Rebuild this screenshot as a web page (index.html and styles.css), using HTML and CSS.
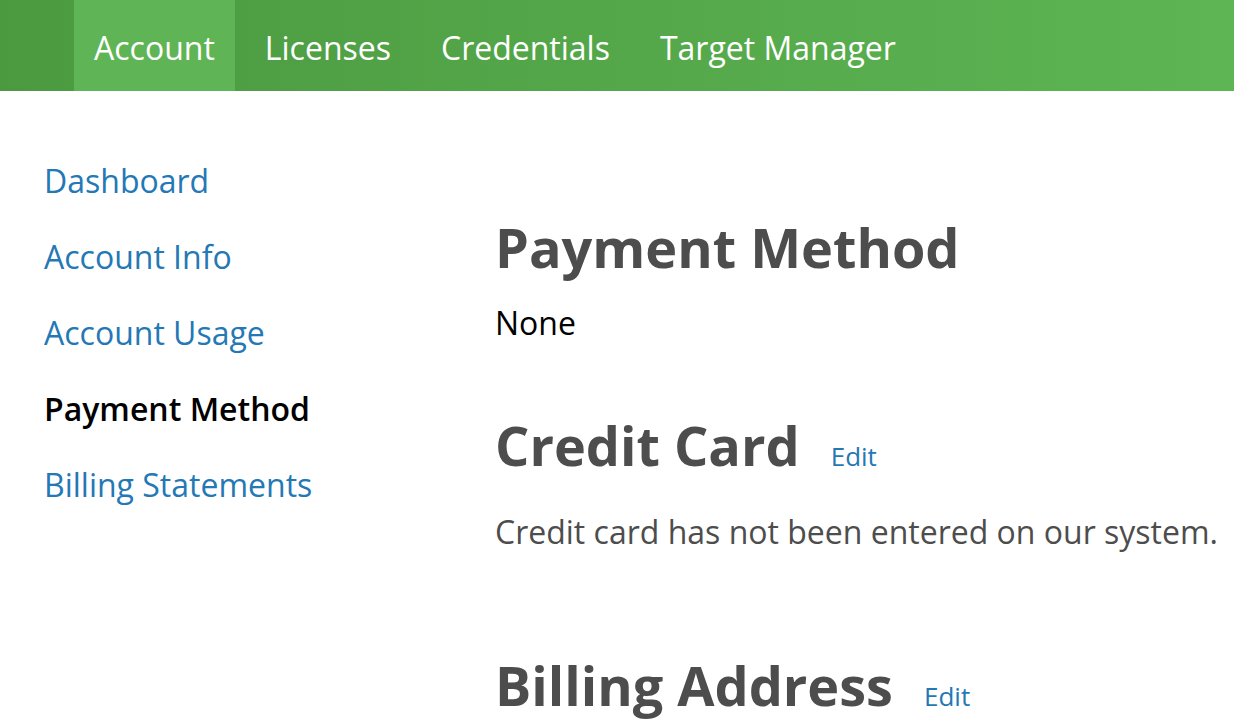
FILE: index.html
```html
<!DOCTYPE html>
<html lang="en">
<head>
    <meta charset="UTF-8">
    <meta name="viewport" content="width=device-width, initial-scale=1.0">
    <title>Payment Method</title>
    <link rel="stylesheet" href="styles.css">
</head>
<body>
    <!-- top navigation -->
    <div class="topnav">
        <a class="tab active" href="#">Account</a>
        <a class="tab" href="#">Licenses</a>
        <a class="tab" href="#">Credentials</a>
        <a class="tab" href="#">Target Manager</a>
    </div>
    <div class="page">
        <ul class="sidebar">
            <li><a href="#">Dashboard</a></li>
            <li><a href="#">Account Info</a></li>
            <li><a href="#">Account Usage</a></li>
            <li class="current">Payment Method</li>
            <li><a href="#">Billing Statements</a></li>
        </ul>
        <div class="content">
            <h1>Payment Method</h1>
            <p class="value">None</p>
            <h2>Credit Card <a class="edit" href="#">Edit</a></h2>
            <p class="note">Credit card has not been entered on our system.</p>
            <h2 class="billing">Billing Address <a class="edit" href="#">Edit</a></h2>
        </div>
    </div>
</body>
</html>
```

FILE: styles.css
```css
body {
    margin: 0;
    font-family: "Open Sans", "Liberation Sans", sans-serif;
    background: #fff;
    overflow: hidden;
}
.topnav {
    display: flex;
    gap: 10px;
    height: 91px;
    padding-left: 74px;
    background: linear-gradient(to right, #4b9a40, #5db553);
}
.tab {
    display: flex;
    align-items: center;
    padding: 4px 20px 0;
    color: #fff;
    font-size: 32px;
    text-decoration: none;
}
.tab.active {
    background-color: #5fb556;
}
.page {
    display: flex;
}
.sidebar {
    list-style: none;
    margin: 0;
    padding: 68px 0 0 44px;
    width: 451px;
    flex-shrink: 0;
}
.sidebar li {
    font-size: 32px;
    line-height: 44px;
    margin-bottom: 32px;
}
.sidebar a {
    color: #2478b5;
    text-decoration: none;
}
.sidebar .current {
    color: #000;
    font-weight: 600;
}
.content {
    padding-top: 121px;
}
h1, h2 {
    margin: 0;
    color: #4d4d4d;
    font-size: 54px;
    font-weight: 700;
    line-height: 70px;
}
.value {
    margin: 21px 0 67px;
    color: #000;
    font-size: 32px;
    line-height: 40px;
}
.edit {
    margin-left: 17px;
    color: #2478b5;
    font-size: 26px;
    font-weight: 400;
    text-decoration: none;
}
.note {
    margin: 21px 0 0;
    color: #4d4d4d;
    font-size: 32px;
    line-height: 40px;
}
.billing {
    margin-top: 98px;
}
```
